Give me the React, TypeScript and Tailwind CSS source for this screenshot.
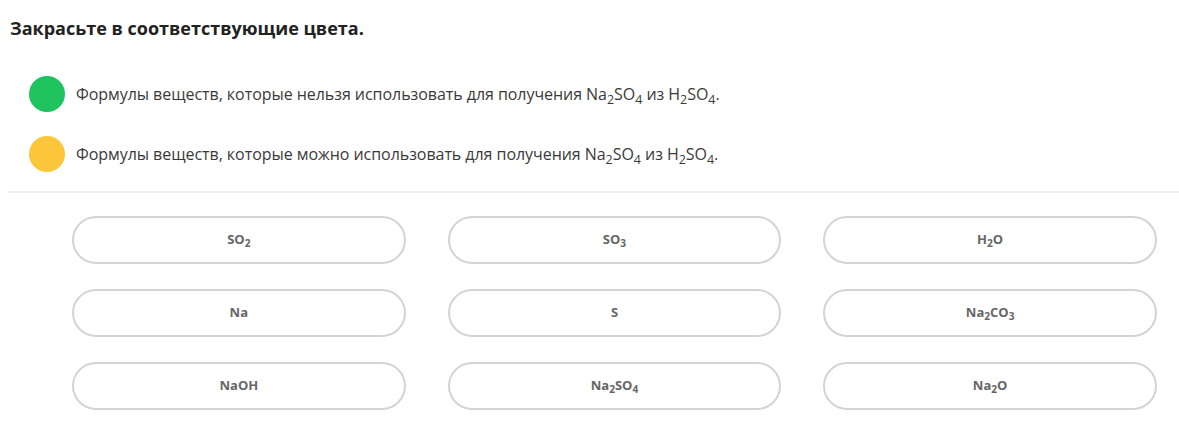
type Part = [string, string?];

const FORMULAS: Part[][] = [
  [["SO", "2"]],
  [["SO", "3"]],
  [["H", "2"], ["O"]],
  [["Na"]],
  [["S"]],
  [["Na", "2"], ["CO", "3"]],
  [["NaOH"]],
  [["Na", "2"], ["SO", "4"]],
  [["Na", "2"], ["O"]],
];

function Sub({ children }: { children: string }) {
  return <sub className="text-[0.78em] relative top-[0.3em] align-baseline">{children}</sub>;
}

function Formula({ parts }: { parts: Part[] }) {
  return (
    <span>
      {parts.map(([text, sub], i) => (
        <span key={i}>
          {text}
          {sub && <Sub>{sub}</Sub>}
        </span>
      ))}
    </span>
  );
}

function LegendRow({ color, word }: { color: string; word: string }) {
  return (
    <div className="flex items-center gap-[11px] h-9">
      <span className={`w-9 h-9 rounded-full shrink-0 ${color}`} />
      <p className="text-[16px] text-[#3a3a3a] tracking-[-0.05px]">
        Формулы веществ, которые {word} использовать для получения Na<Sub>2</Sub>SO
        <Sub>4</Sub> из H<Sub>2</Sub>SO<Sub>4</Sub>.
      </p>
    </div>
  );
}

export default function App() {
  return (
    <div
      className="w-[1179px] h-[436px] bg-white overflow-hidden"
      style={{ fontFamily: '"Open Sans", "Noto Sans", sans-serif' }}
    >
      <div className="pl-[10px] pt-[15px]">
        <h2 className="text-[18px] font-bold text-[#222] leading-[26px]">
          Закрасьте в соответствующие цвета.
        </h2>
      </div>
      <div className="flex flex-col gap-6 pl-[29px] pt-[35px]">
        <LegendRow color="bg-[#1fc35e]" word="нельзя" />
        <LegendRow color="bg-[#fcc63b]" word="можно" />
      </div>
      <div className="ml-2 mt-[19px] border-t-2 border-[#eeeeee]" />
      <div className="grid grid-cols-3 gap-x-[42px] gap-y-[25px] pl-[72px] pr-[22px] pt-[23px]">
        {FORMULAS.map((parts, i) => (
          <div
            key={i}
            className="h-12 rounded-full border-2 border-[#d4d4d4] flex items-center justify-center text-[13px] font-bold text-[#666]"
          >
            <Formula parts={parts} />
          </div>
        ))}
      </div>
    </div>
  );
}
